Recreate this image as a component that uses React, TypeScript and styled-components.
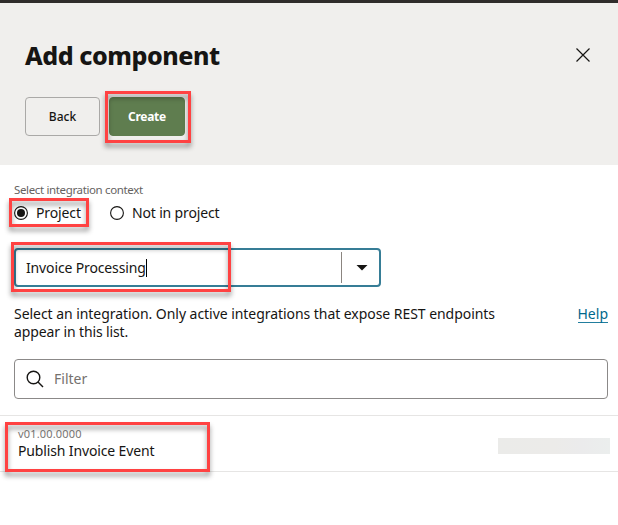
import React from "react";
import styled, { createGlobalStyle } from "styled-components";

const GlobalStyle = createGlobalStyle`
  * { box-sizing: border-box; }
  body {
    margin: 0;
    background: #fff;
    color: #161513;
    font-family: "Noto Sans", "Open Sans", sans-serif;
    font-size: 14px;
    overflow: hidden;
  }
`;

const Page = styled.div`
  position: relative;
  width: 618px;
  height: 525px;
  background: #fff;
`;

const Header = styled.header`
  height: 165px;
  padding: 34px 25px 0;
  background: #f0efed;
  border-top: 3px solid #2f2c2b;
`;

const TitleRow = styled.div`
  display: flex;
  justify-content: space-between;
  height: 60px;
`;

const Title = styled.h1`
  margin: 0;
  font-size: 25px;
  line-height: 36px;
  font-weight: 800;
  letter-spacing: -0.45px;
`;

const CloseButton = styled.button`
  width: 20px;
  height: 20px;
  margin: 8px 0 0;
  padding: 0;
  border: 0;
  background: none;
  svg { display: block; }
`;

const Actions = styled.div`
  display: flex;
  gap: 9px;
`;

const Button = styled.button<{ $primary?: boolean }>`
  width: ${(p) => (p.$primary ? 76 : 75)}px;
  height: 39px;
  padding: 0;
  border: 1px solid ${(p) => (p.$primary ? "#5f7d4f" : "#aaa9a7")};
  border-radius: 4px;
  background: ${(p) => (p.$primary ? "#5f7d4f" : "transparent")};
  color: ${(p) => (p.$primary ? "#fff" : "#161513")};
  font: ${(p) => (p.$primary ? 700 : 500)} 12px/20px "Noto Sans", sans-serif;
  letter-spacing: ${(p) => (p.$primary ? -0.3 : 0)}px;
`;

const Body = styled.main`
  padding: 15px 10px 0 14px;
`;

const FieldLabel = styled.div`
  height: 20px;
  font-size: 11.5px;
  line-height: 20px;
  letter-spacing: -0.36px;
  color: #65625f;
`;

const RadioGroup = styled.div`
  display: flex;
  gap: 29px;
  height: 26px;
`;

const RadioOption = styled.div`
  display: flex;
  align-items: center;
  gap: 8px;
  line-height: 26px;
  svg { display: block; }
`;

const Combo = styled.div`
  display: flex;
  align-items: center;
  width: 367px;
  height: 39px;
  margin-top: 22px;
  padding-left: 10px;
  border: 2px solid #367d96;
  border-radius: 4px;
`;

const ComboValue = styled.div`
  display: flex;
  align-items: center;
  flex: 1;
`;

const Caret = styled.span`
  width: 1px;
  height: 18px;
  background: #000;
`;

const ComboToggle = styled.div`
  display: flex;
  align-items: center;
  width: 38px;
  height: 31px;
  padding-left: 14px;
  border-left: 1px solid #8b8580;
`;

const Intro = styled.div`
  display: flex;
  justify-content: space-between;
  margin-top: 18px;
  line-height: 18px;
`;

const IntroText = styled.p`
  margin: 0;
  white-space: nowrap;
`;

const HelpLink = styled.a`
  height: 18px;
  border-bottom: 1px solid #227e9e;
  color: #00688c;
`;

const Filter = styled.div`
  display: flex;
  align-items: center;
  gap: 10px;
  height: 40px;
  margin-top: 18px;
  padding-left: 11px;
  border: 1px solid #8b8988;
  border-radius: 4px;
  color: #75716e;
`;

const FilterPlaceholder = styled.span`
  padding-bottom: 2px;
`;

const ListItem = styled.div`
  display: flex;
  justify-content: space-between;
  height: 57px;
  margin-top: 16px;
  padding: 9px 8px 0 18px;
  border: solid #e6e5e4;
  border-width: 1px 0;
`;

const Version = styled.div`
  font-size: 11px;
  line-height: 17px;
  letter-spacing: 0.17px;
  color: #7a7774;
`;

const ItemName = styled.div`
  line-height: 18px;
`;

const Redacted = styled.div`
  width: 112px;
  height: 16px;
  margin-top: 13px;
  background: linear-gradient(90deg, #ebebe9, #ecebe9 50%, #ebebec 75%, #ebeeed);
`;

const Tracked = styled.span<{ $spacing: number }>`
  letter-spacing: ${(p) => p.$spacing}px;
`;

const Highlight = styled.div<{ $x: number; $y: number; $w: number; $h: number }>`
  position: absolute;
  left: ${(p) => p.$x}px;
  top: ${(p) => p.$y}px;
  width: ${(p) => p.$w}px;
  height: ${(p) => p.$h}px;
  border: 3px solid #ff4242;
  filter: drop-shadow(0 4px 2.5px rgba(0, 0, 0, 0.42));
  pointer-events: none;
`;

const Radio = ({ checked = false }: { checked?: boolean }) => (
  <svg width="14" height="14" viewBox="0 0 14 14">
    <circle cx="7" cy="7" r="6.4" fill="#fff" stroke="#161513" strokeWidth="1.1" />
    {checked && <circle cx="7" cy="7" r="4" fill="#161513" />}
  </svg>
);

export default function App() {
  return (
    <>
      <GlobalStyle />
      <Page>
        <Header>
          <TitleRow>
            <Title>Add component</Title>
            <CloseButton aria-label="Close">
              <svg width="20" height="20" viewBox="0 0 20 20" stroke="#161513" strokeWidth="1.2">
                <path d="M3.5 3.5l13 13M16.5 3.5l-13 13" />
              </svg>
            </CloseButton>
          </TitleRow>
          <Actions>
            <Button>Back</Button>
            <Button $primary>Create</Button>
          </Actions>
        </Header>
        <Body>
          <FieldLabel>Select integration context</FieldLabel>
          <RadioGroup>
            <RadioOption><Radio checked /><Tracked $spacing={-0.12}>Project</Tracked></RadioOption>
            <RadioOption><Radio /><Tracked $spacing={-0.14}>Not in project</Tracked></RadioOption>
          </RadioGroup>
          <Combo>
            <ComboValue><Tracked $spacing={-0.14}>Invoice Processing</Tracked><Caret /></ComboValue>
            <ComboToggle>
              <svg width="12" height="6" viewBox="0 0 12 6"><path d="M.5 0h11L6 5.5z" fill="#161513" /></svg>
            </ComboToggle>
          </Combo>
          <Intro>
            <IntroText>
              <Tracked $spacing={-0.05}>Select an integration. Only active integrations that expose REST endpoints</Tracked>
              <br />
              <Tracked $spacing={-0.12}>appear in this list.</Tracked>
            </IntroText>
            <HelpLink>Help</HelpLink>
          </Intro>
          <Filter>
            <svg width="18" height="18" viewBox="0 0 18 18" fill="none" stroke="#161513" strokeWidth="1.4">
              <circle cx="7.5" cy="7.5" r="6.3" />
              <path d="M12 12l5 5" />
            </svg>
            <FilterPlaceholder>Filter</FilterPlaceholder>
          </Filter>
        </Body>
        <ListItem>
          <div>
            <Version>v01.00.0000</Version>
            <ItemName><Tracked $spacing={-0.14}>Publish Invoice Event</Tracked></ItemName>
          </div>
          <Redacted />
        </ListItem>
        <Highlight $x={105} $y={91} $w={86} $h={52} />
        <Highlight $x={9} $y={198} $w={80} $h={29} />
        <Highlight $x={11} $y={242} $w={220} $h={50} />
        <Highlight $x={5} $y={422} $w={205} $h={50} />
      </Page>
    </>
  );
}
